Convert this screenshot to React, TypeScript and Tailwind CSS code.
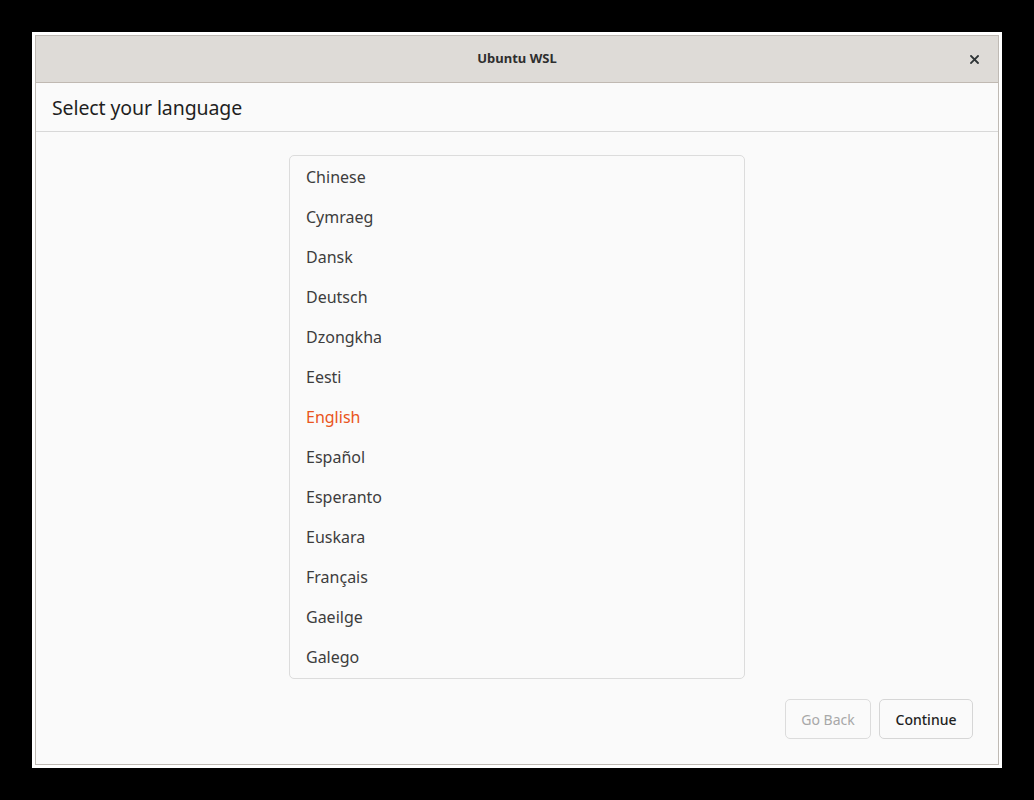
import { useState } from 'react'

const LANGUAGES = [
  'Chinese',
  'Cymraeg',
  'Dansk',
  'Deutsch',
  'Dzongkha',
  'Eesti',
  'English',
  'Español',
  'Esperanto',
  'Euskara',
  'Français',
  'Gaeilge',
  'Galego',
]

export default function App() {
  const [selected, setSelected] = useState('English')

  return (
    <div
      className="h-[800px] w-[1034px] bg-black pt-[32px] pl-[32px]"
      style={{ fontFamily: '"Noto Sans", "Open Sans", sans-serif' }}
    >
      <div className="flex h-[736px] w-[970px] flex-col border-[3px] border-white">
        <div className="flex flex-1 flex-col border border-[#bfbab4] bg-[#fafafa]">
          {/* title bar */}
          <div className="relative flex h-[47px] shrink-0 items-center justify-center border-b border-[#c0b9b2] bg-[#dedbd7]">
            <span className="text-[13px] font-bold text-[#2e2e2e]">Ubuntu WSL</span>
            <button className="absolute right-[17px] top-[16px] flex h-[14px] w-[14px] items-center justify-center text-[#2e3436]">
              <svg width="9" height="9" viewBox="0 0 9 9">
                <path d="M1 1 L8 8 M8 1 L1 8" stroke="currentColor" strokeWidth="1.8" strokeLinecap="square" />
              </svg>
            </button>
          </div>

          {/* page header */}
          <div className="flex h-[49px] shrink-0 items-center border-b border-[#d8d8d8] px-[16px] pt-[2px]">
            <h1 className="text-[19.5px] tracking-[-0.1px] text-[#1f1f1f]">Select your language</h1>
          </div>

          {/* body */}
          <div className="flex flex-1 flex-col px-[25px] pt-[23px] pb-[25px]">
            <div className="mx-auto w-[456px] rounded-[5px] border border-[#dcdcdc] bg-[#fafafa] py-[1px]">
              {LANGUAGES.map((lang) => (
                <button
                  key={lang}
                  onClick={() => setSelected(lang)}
                  className={
                    'flex h-[40px] w-full items-center px-[16px] text-left text-[16px] ' +
                    (lang === selected ? 'text-[#e95420]' : 'text-[#3d3d3d]')
                  }
                >
                  {lang}
                </button>
              ))}
            </div>

            <div className="mt-auto flex justify-end gap-[8px]">
              <button
                disabled
                className="h-[40px] w-[86px] rounded-[5px] border border-[#dcdcdc] text-[14px] text-[#a8a8a8]"
              >
                Go Back
              </button>
              <button className="h-[40px] w-[94px] rounded-[5px] border border-[#d6d6d6] bg-[#fafafa] text-[14px] font-medium text-[#1f1f1f]">
                Continue
              </button>
            </div>
          </div>
        </div>
      </div>
    </div>
  )
}
